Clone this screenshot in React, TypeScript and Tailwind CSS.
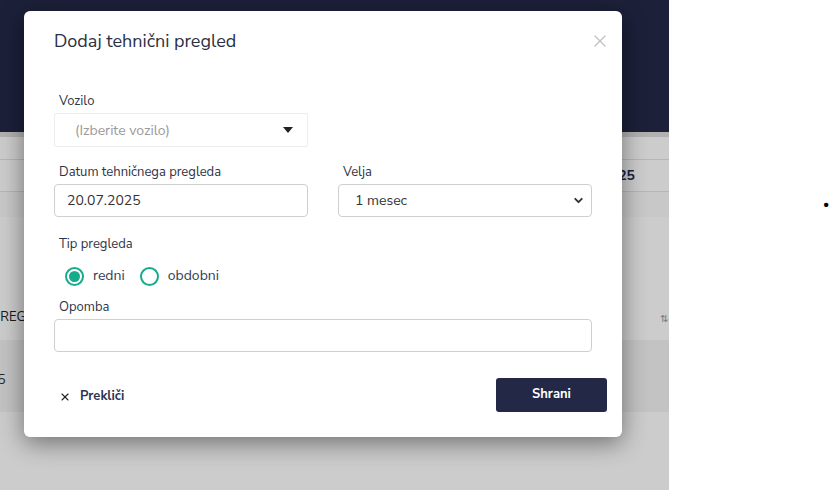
import { ChevronDown, X } from 'lucide-react';

const font = { fontFamily: '"Nunito Sans", Lato, "Noto Sans", sans-serif' };

function Field({ label, children }: { label: string; children: React.ReactNode }) {
  return (
    <div className="flex flex-col">
      <label className="text-[13px] leading-[18px] text-[#2f3447] mb-[3px] pl-[5px]">{label}</label>
      {children}
    </div>
  );
}

function Radio({ checked, label }: { checked?: boolean; label: string }) {
  return (
    <label className="flex items-center gap-[9px] mr-[15px]">
      <span className="w-[19px] h-[19px] rounded-full border-2 border-[#15ab8c] flex items-center justify-center">
        {checked && <span className="w-[11px] h-[11px] rounded-full bg-[#15ab8c]" />}
      </span>
      <span className="text-[14px] leading-[20px] text-[#363b52]">{label}</span>
    </label>
  );
}

export default function App() {
  return (
    <div className="flex w-[829px] h-[490px] bg-white overflow-hidden" style={font}>
      {/* Page behind the modal */}
      <div className="relative w-[669px] h-full overflow-hidden">
        <div className="h-[132px] bg-[#232848]" />
        <div className="h-[5px] bg-[#dedede]" />
        <div className="h-[22px] bg-white" />
        <div className="h-[33px] border-y border-[#e4e4e4] bg-white flex items-center justify-end pr-[34px]">
          <span className="text-[14px] font-bold text-[#22284a]">2025</span>
        </div>
        <div className="h-[25px] bg-[#fbfbfb]" />
        <div className="h-[123px] bg-white flex items-end justify-between pb-[13px]">
          <span className="text-[13px] text-[#222] -ml-[8px]">PREGLED</span>
          <span className="text-[10px] text-[#999] mr-[1px]">⇅</span>
        </div>
        <div className="h-[72px] bg-[#f4f4f4] flex items-center pt-[6px]">
          <span className="text-[14px] text-[#333] -ml-[28px]">2025</span>
        </div>
        <div className="bg-white h-[80px]" />

        {/* backdrop */}
        <div className="absolute inset-0 bg-black/20" />

        {/* modal */}
        <div className="absolute left-[24px] top-[11px] w-[598px] h-[426px] bg-white rounded-[6px] shadow-[0_6px_24px_rgba(0,0,0,0.45)] flex flex-col">
          <div className="flex items-start justify-between pl-[30px] pr-[12px] pt-[18px]">
            <h2 className="text-[18px] leading-[24px] text-[#2b3044]">Dodaj tehnični pregled</h2>
            <X className="w-[20px] h-[20px] text-[#c4c4c4] mt-[2px]" strokeWidth={1.6} />
          </div>

          <div className="px-[30px] pt-[39px] flex flex-col">
            <div className="grid grid-cols-2 gap-x-[30px]">
              <Field label="Vozilo">
                <div className="h-[34px] border border-[#ededed] rounded-[2px] flex items-center justify-between pl-[20px] pr-[14px]">
                  <span className="text-[14px] text-[#9a9a9a]">(Izberite vozilo)</span>
                  <span className="w-0 h-0 border-l-[5px] border-r-[5px] border-t-[6px] border-l-transparent border-r-transparent border-t-[#222]" />
                </div>
              </Field>
            </div>

            <div className="grid grid-cols-2 gap-x-[30px] mt-[16px]">
              <Field label="Datum tehničnega pregleda">
                <div className="h-[33px] border border-[#cfcfcf] rounded-[4px] flex items-center pl-[12px]">
                  <span className="text-[14px] text-[#333]">20.07.2025</span>
                </div>
              </Field>
              <Field label="Velja">
                <div className="h-[33px] border border-[#cfcfcf] rounded-[4px] flex items-center justify-between pl-[16px] pr-[6px]">
                  <span className="text-[14px] text-[#333]">1 mesec</span>
                  <ChevronDown className="w-[13px] h-[13px] text-[#333]" strokeWidth={3.5} />
                </div>
              </Field>
            </div>

            <div className="mt-[18px]">
              <div className="text-[13px] leading-[18px] text-[#2f3447] pl-[5px]">Tip pregleda</div>
              <div className="flex items-center mt-[13px] pl-[11px]">
                <Radio checked label="redni" />
                <Radio label="obdobni" />
              </div>
            </div>

            <div className="mt-[12px]">
              <Field label="Opomba">
                <div className="h-[33px] border border-[#cfcfcf] rounded-[4px]" />
              </Field>
            </div>
          </div>

          <div className="flex items-center justify-between pl-[35px] pr-[15px] mt-[26px]">
            <button className="flex items-center gap-[9px] text-[13px] font-bold text-[#2d3252] pt-[4px]">
              <X className="w-[12px] h-[12px] text-[#222]" strokeWidth={2.2} />
              Prekliči
            </button>
            <button className="w-[111px] h-[34px] rounded-[3px] bg-[#222845] text-white text-[13px] font-bold">
              Shrani
            </button>
          </div>
        </div>
      </div>

      {/* right side */}
      <div className="flex-1 relative">
        <span className="absolute left-[154px] top-[195px] text-[12px] text-black">•</span>
      </div>
    </div>
  );
}
